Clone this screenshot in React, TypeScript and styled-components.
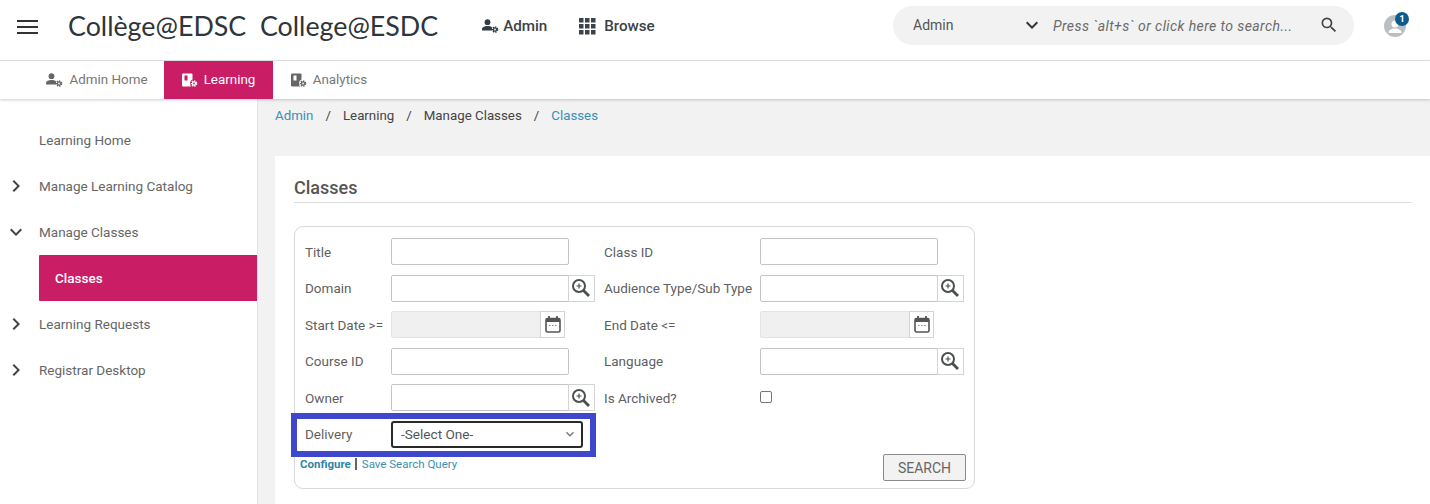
import React from 'react';
import styled, { createGlobalStyle } from 'styled-components';
import { MdChevronRight, MdExpandMore, MdSearch } from 'react-icons/md';

const GlobalStyle = createGlobalStyle`
    html, body {
        margin: 0;
        padding: 0;
        width: 1430px;
        height: 504px;
        overflow: hidden;
        background: #fff;
        font-family: Roboto, "Liberation Sans", sans-serif;
    }
    * {
        box-sizing: border-box;
    }
`;

const Page = styled.div`
    width: 1430px;
    height: 504px;
    display: flex;
    flex-direction: column;
    overflow: hidden;
`;

const Header = styled.header`
    height: 61px;
    flex: none;
    display: flex;
    align-items: center;
    padding: 0 24px 8px 17px;
    border-bottom: 1px solid #e4e4e4;
`;

const Burger = styled.div`
    width: 21px;
    height: 14px;
    margin-right: 30px;
    margin-top: 1px;
    display: flex;
    flex-direction: column;
    justify-content: space-between;
    span {
        height: 2px;
        background: #333;
    }
`;

const Brand = styled.div`
    font-family: Lato, "Open Sans", sans-serif;
    font-size: 26.8px;
    color: #2e353b;
    white-space: pre;
    margin-right: 44px;
    margin-top: -1px;
`;

const HeaderLink = styled.div<{ $gap: number; $width: number }>`
    display: flex;
    align-items: center;
    gap: ${(p) => p.$gap}px;
    width: ${(p) => p.$width}px;
    font-size: 15.2px;
    font-weight: 500;
    color: #3b4248;
`;

const SearchBar = styled.div`
    margin-left: auto;
    width: 461px;
    height: 39px;
    margin-top: -2px;
    margin-right: 30px;
    border-radius: 20px;
    background: #f2f2f2;
    display: flex;
    align-items: center;
    padding: 0 15px 0 20px;
    color: #555;
    font-size: 14px;
`;

const ScopeLabel = styled.div`
    width: 107px;
`;

const SearchHint = styled.div`
    flex: 1;
    margin-left: 9px;
    margin-top: 2px;
    font-style: italic;
    font-size: 14px;
    letter-spacing: 0.41px;
    color: #6a6a6a;
    white-space: nowrap;
`;

const AvatarWrap = styled.div`
    position: relative;
`;

const Avatar = styled.div`
    width: 22px;
    height: 22px;
    border-radius: 50%;
    background: #b9bec2;
    overflow: hidden;
`;

const Badge = styled.div`
    position: absolute;
    top: -3px;
    right: -3px;
    width: 14px;
    height: 14px;
    border-radius: 50%;
    background: #0f5a8c;
    color: #fff;
    font-size: 9px;
    font-weight: 700;
    display: flex;
    align-items: center;
    justify-content: center;
`;

const Tabs = styled.nav`
    height: 38px;
    flex: none;
    display: flex;
    padding-left: 32px;
    position: relative;
    z-index: 1;
    box-shadow: 0 1px 3px rgba(0, 0, 0, 0.2);
`;

const Tab = styled.div<{ $active?: boolean; $width: number; $endPad?: number }>`
    width: ${(p) => p.$width}px;
    display: flex;
    align-items: center;
    justify-content: center;
    gap: 6px;
    padding-bottom: 1px;
    padding-right: ${(p) => p.$endPad ?? 0}px;
    font-size: 13.4px;
    color: ${(p) => (p.$active ? '#fff' : '#777')};
    background: ${(p) => (p.$active ? '#c91d66' : 'transparent')};
`;

const Body = styled.div`
    flex: 1;
    display: flex;
    min-height: 0;
`;

const Sidebar = styled.aside`
    width: 258px;
    flex: none;
    padding-top: 18px;
    border-right: 1px solid #e6e6e6;
`;

const NavRow = styled.div`
    height: 46px;
    display: flex;
    align-items: center;
    font-size: 13.5px;
    color: #666;
    svg {
        color: #444;
    }
`;

const NavIcon = styled.div`
    width: 39px;
    padding-left: 4px;
    display: flex;
`;

const NavActive = styled.div`
    height: 46px;
    margin-left: 39px;
    padding-left: 16px;
    display: flex;
    align-items: center;
    background: #c91d66;
    border-radius: 1px 0 0 1px;
    color: #fff;
    font-size: 13.5px;
    font-weight: 500;
`;

const Main = styled.main`
    flex: 1;
    background: #f2f2f2;
    display: flex;
    flex-direction: column;
    padding-left: 17px;
    min-width: 0;
`;

const Crumbs = styled.div`
    height: 57px;
    flex: none;
    padding-top: 9px;
    display: flex;
    gap: 12px;
    font-size: 13.3px;
    color: #444;
`;

const CrumbLink = styled.span`
    color: #3a8fb0;
`;

const Panel = styled.section`
    flex: 1;
    background: #fff;
    padding: 21px 19px 0 19px;
`;

const PanelTitle = styled.h2`
    margin: 0 0 23px;
    height: 26px;
    font-size: 18px;
    font-weight: 500;
    line-height: 22px;
    color: #555;
    border-bottom: 1px solid #dcdcdc;
`;

const SearchBox = styled.div`
    width: 681px;
    height: 263px;
    border: 1px solid #d9d9d9;
    border-radius: 9px;
    padding: 11px 9px 0 10px;
    position: relative;
`;

const FormGrid = styled.div`
    display: grid;
    grid-template-columns: 86px 213px 156px 1fr;
    grid-auto-rows: 36.5px;
    align-items: start;
`;

const Label = styled.div`
    height: 27px;
    display: flex;
    align-items: center;
    font-size: 13.5px;
    color: #5f5f5f;
    white-space: nowrap;
`;

const FieldRow = styled.div`
    display: flex;
`;

const TextInput = styled.div<{ $disabled?: boolean }>`
    width: ${(p) => (p.$disabled ? '150px' : '178px')};
    height: 27px;
    border: 1px solid ${(p) => (p.$disabled ? '#e4e4e4' : '#c4c4c4')};
    border-radius: 2px;
    background: ${(p) => (p.$disabled ? '#f0f0f0' : '#fff')};
`;

const AddOn = styled.div<{ $small?: boolean }>`
    width: ${(p) => (p.$small ? '25px' : '27px')};
    height: 27px;
    margin-left: -1px;
    padding-right: ${(p) => (p.$small ? '0' : '1px')};
    border: 1px solid #d4d4d4;
    background: #fff;
    display: flex;
    align-items: center;
    justify-content: center;
`;

const CheckBox = styled.div`
    width: 12px;
    height: 12px;
    margin-top: 7px;
    border: 1px solid #767676;
    border-radius: 2px;
`;

const Highlight = styled.div`
    position: absolute;
    left: -4px;
    top: 186px;
    width: 305px;
    height: 44px;
    border: 6px solid #3f48cc;
    pointer-events: none;
`;

const DeliverySelect = styled.div`
    width: 192px;
    height: 27px;
    border: 2px solid #2a2a2a;
    border-radius: 3px;
    display: flex;
    align-items: center;
    justify-content: space-between;
    padding: 0 3px 0 8px;
    font-size: 13.6px;
    color: #555;
`;

const QueryLinks = styled.div`
    position: absolute;
    left: 5px;
    top: 230px;
    display: flex;
    align-items: center;
    font-size: 11.5px;
    color: #3a8fb0;
`;

const ConfigureLink = styled.span`
    font-weight: 700;
    color: #2f86a8;
`;

const LinkDivider = styled.span`
    width: 2px;
    height: 12px;
    margin: 0 5px 0 4px;
    background: #666;
`;

const SearchButton = styled.div`
    position: absolute;
    right: 8px;
    bottom: 7px;
    width: 83px;
    height: 27px;
    border: 1px solid #8a8a8a;
    border-radius: 2px;
    background: #f2f2f2;
    display: flex;
    align-items: center;
    justify-content: center;
    font-size: 14px;
    color: #666;
`;

const Gear: React.FC<{ color: string; hole: string; cx: number; cy: number }> = ({ color, hole, cx, cy }) => (
    <g>
        <circle cx={cx} cy={cy} r="2.500" fill="none" stroke={color} strokeWidth="1.600" strokeDasharray="1.300 1" />
        <circle cx={cx} cy={cy} r="2.200" fill={color} />
        <circle cx={cx} cy={cy} r="0.900" fill={hole} />
    </g>
);

const AdminGear: React.FC<{ color: string; hole?: string }> = ({ color, hole = '#fff' }) => (
    <svg width="17" height="14" viewBox="0 0 17 14" fill={color}>
        <circle cx="5.500" cy="3.200" r="2.900" />
        <path d="M0 11.500v-1.500C0 8 3 6.900 5.500 6.900c1.700 0 3.500.5 4.500 1.300v3.300z" />
        <Gear color={color} hole={hole} cx={13} cy={10.500} />
    </svg>
);

const BookGear: React.FC<{ color: string; hole: string }> = ({ color, hole }) => (
    <svg width="16" height="14" viewBox="0 0 16 14">
        <rect x="0" y="0.500" width="10.500" height="13" rx="1" fill={color} />
        <rect x="2.500" y="2.500" width="3" height="5" fill={hole} />
        <circle cx="12" cy="10.500" r="4" fill={hole} />
        <Gear color={color} hole={hole} cx={12} cy={10.500} />
    </svg>
);

const GridIcon: React.FC = () => (
    <svg width="17" height="17" viewBox="0 0 17 17" fill="#3b4248">
        {[0, 6, 12].map((y) =>
            [0, 6, 12].map((x) => (
                <rect key={`${x}-${y}`} x={x} y={y} width="4.500" height="4.500" />
            ))
        )}
    </svg>
);

const ZoomIcon: React.FC = () => (
    <svg width="20" height="20" viewBox="0 0 20 20" fill="none" stroke="#4a4f4f">
        <circle cx="8" cy="8" r="6" strokeWidth="2" />
        <path d="M12.500 12.500 L18 18" strokeWidth="2.800" />
        <path d="M8 5.500v5M5.500 8h5" strokeWidth="1.200" />
    </svg>
);

const CalendarIcon: React.FC = () => (
    <svg width="16" height="17" viewBox="0 0 16 17">
        <path d="M4 0v3M12 0v3" stroke="#555" strokeWidth="1.800" />
        <rect x="1" y="2.500" width="14" height="13.500" rx="1.500" fill="none" stroke="#555" strokeWidth="1.600" />
        <rect x="1" y="2.500" width="14" height="3.500" fill="#555" />
        <path d="M4 9.500h8" stroke="#888" strokeWidth="1.200" strokeDasharray="1.500 1.500" />
    </svg>
);

const UserGlyph: React.FC = () => (
    <svg width="22" height="22" viewBox="0 0 22 22" fill="#fff">
        <circle cx="11" cy="9" r="3.500" />
        <path d="M4.500 18c0-3 3-4.500 6.500-4.500s6.500 1.500 6.500 4.500z" />
    </svg>
);

const navIcon = (open: boolean) => (open ? <MdExpandMore size={24} /> : <MdChevronRight size={24} />);

const App: React.FC = () => (
    <Page>
        <GlobalStyle />
        <Header>
            <Burger>
                <span />
                <span />
                <span />
            </Burger>
            <Brand>{'Collège@EDSC  College@ESDC'}</Brand>
            <HeaderLink $gap={4} $width={97}>
                <AdminGear color="#333b42" />
                Admin
            </HeaderLink>
            <HeaderLink $gap={8} $width={90}>
                <GridIcon />
                Browse
            </HeaderLink>
            <SearchBar>
                <ScopeLabel>Admin</ScopeLabel>
                <MdExpandMore size={24} color="#333" />
                <SearchHint>Press `alt+s` or click here to search...</SearchHint>
                <MdSearch size={20} color="#444" />
            </SearchBar>
            <AvatarWrap>
                <Avatar>
                    <UserGlyph />
                </Avatar>
                <Badge>1</Badge>
            </AvatarWrap>
        </Header>
        <Tabs>
            <Tab $width={132} $endPad={2}>
                <AdminGear color="#666" />
                Admin Home
            </Tab>
            <Tab $active $width={109}>
                <BookGear color="#fff" hole="#c91d66" />
                Learning
            </Tab>
            <Tab $width={112}>
                <BookGear color="#666" hole="#fff" />
                Analytics
            </Tab>
        </Tabs>
        <Body>
            <Sidebar>
                <NavRow>
                    <NavIcon />
                    Learning Home
                </NavRow>
                <NavRow>
                    <NavIcon>{navIcon(false)}</NavIcon>
                    Manage Learning Catalog
                </NavRow>
                <NavRow>
                    <NavIcon>{navIcon(true)}</NavIcon>
                    Manage Classes
                </NavRow>
                <NavActive>Classes</NavActive>
                <NavRow>
                    <NavIcon>{navIcon(false)}</NavIcon>
                    Learning Requests
                </NavRow>
                <NavRow>
                    <NavIcon>{navIcon(false)}</NavIcon>
                    Registrar Desktop
                </NavRow>
            </Sidebar>
            <Main>
                <Crumbs>
                    <CrumbLink>Admin</CrumbLink>
                    <span>/</span>
                    <span>Learning</span>
                    <span>/</span>
                    <span>Manage Classes</span>
                    <span>/</span>
                    <CrumbLink>Classes</CrumbLink>
                </Crumbs>
                <Panel>
                    <PanelTitle>Classes</PanelTitle>
                    <SearchBox>
                        <FormGrid>
                            <Label>Title</Label>
                            <FieldRow>
                                <TextInput />
                            </FieldRow>
                            <Label>Class ID</Label>
                            <FieldRow>
                                <TextInput />
                            </FieldRow>

                            <Label>Domain</Label>
                            <FieldRow>
                                <TextInput />
                                <AddOn>
                                    <ZoomIcon />
                                </AddOn>
                            </FieldRow>
                            <Label>Audience Type/Sub Type</Label>
                            <FieldRow>
                                <TextInput />
                                <AddOn>
                                    <ZoomIcon />
                                </AddOn>
                            </FieldRow>

                            <Label>Start Date &gt;=</Label>
                            <FieldRow>
                                <TextInput $disabled />
                                <AddOn $small>
                                    <CalendarIcon />
                                </AddOn>
                            </FieldRow>
                            <Label>End Date &lt;=</Label>
                            <FieldRow>
                                <TextInput $disabled />
                                <AddOn $small>
                                    <CalendarIcon />
                                </AddOn>
                            </FieldRow>

                            <Label>Course ID</Label>
                            <FieldRow>
                                <TextInput />
                            </FieldRow>
                            <Label>Language</Label>
                            <FieldRow>
                                <TextInput />
                                <AddOn>
                                    <ZoomIcon />
                                </AddOn>
                            </FieldRow>

                            <Label>Owner</Label>
                            <FieldRow>
                                <TextInput />
                                <AddOn>
                                    <ZoomIcon />
                                </AddOn>
                            </FieldRow>
                            <Label>Is Archived?</Label>
                            <FieldRow>
                                <CheckBox />
                            </FieldRow>

                            <Label>Delivery</Label>
                            <FieldRow>
                                <DeliverySelect>
                                    -Select One-
                                    <MdExpandMore size={16} color="#777" />
                                </DeliverySelect>
                            </FieldRow>
                        </FormGrid>
                        <Highlight />
                        <QueryLinks>
                            <ConfigureLink>Configure</ConfigureLink>
                            <LinkDivider />
                            Save Search Query
                        </QueryLinks>
                        <SearchButton>SEARCH</SearchButton>
                    </SearchBox>
                </Panel>
            </Main>
        </Body>
    </Page>
);

export default App;
